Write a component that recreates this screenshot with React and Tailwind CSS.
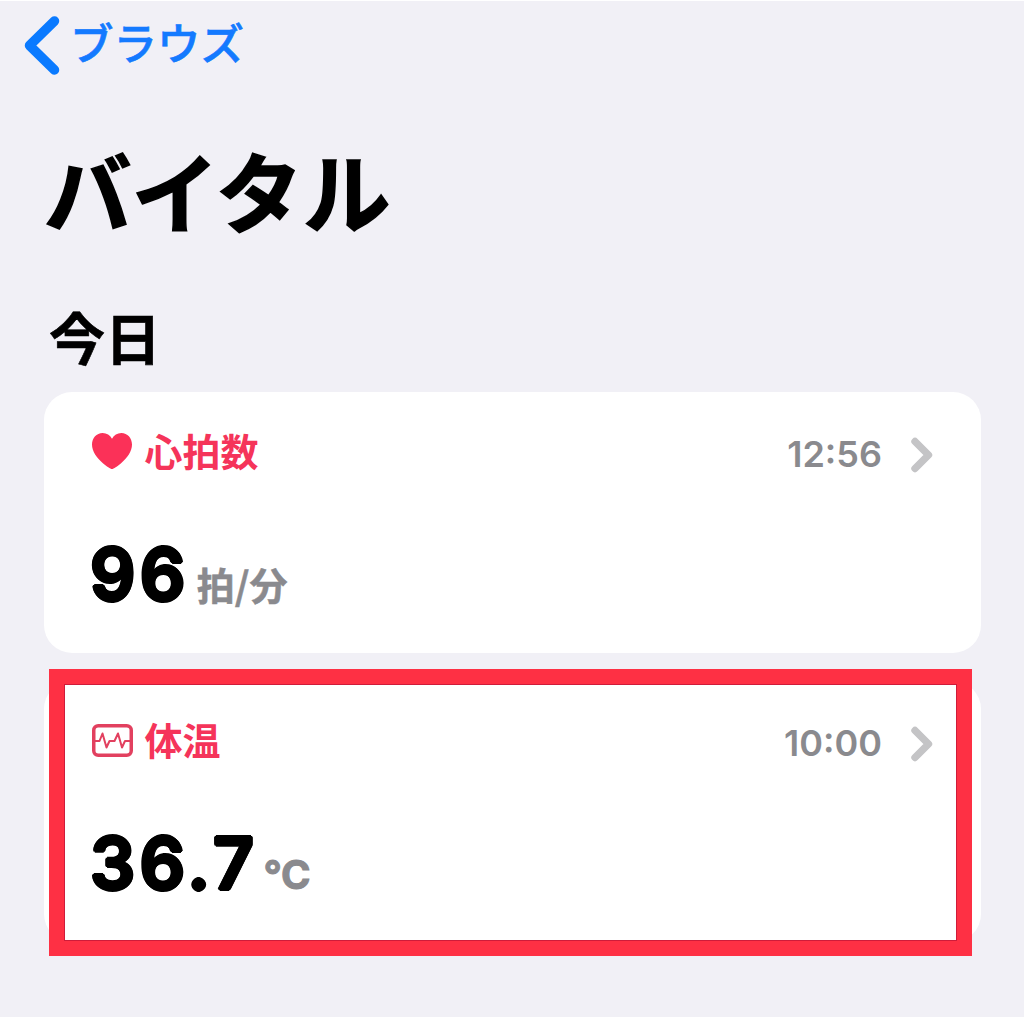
function Chevron() {
  return (
    <svg width="22" height="36" viewBox="0 0 22 36" fill="none" className="shrink-0">
      <path
        d="M4 4.5L17.5 18L4 31.5"
        stroke="#c4c4c6"
        strokeWidth="7.4"
        strokeLinecap="round"
        strokeLinejoin="round"
      />
    </svg>
  );
}

function HeartIcon() {
  return (
    <svg width="40" height="36" viewBox="0 0 40 36" className="shrink-0">
      <path
        d="M20 36C18.6 36 14.4 33.2 11.2 30.4C4.6 24.9 0 18.6 0 11.6C0 5 4.6 0 10.6 0C14.8 0 18 2.2 20 5.7C22 2.2 25.2 0 29.4 0C35.4 0 40 5 40 11.6C40 18.6 35.4 24.9 28.8 30.4C25.6 33.2 21.4 36 20 36Z"
        fill="#fb3158"
      />
    </svg>
  );
}

function VitalsIcon() {
  return (
    <svg width="41" height="33" viewBox="0 0 41 33" fill="none" className="shrink-0">
      <rect x="1.75" y="1.75" width="37.5" height="29.5" rx="4.5" stroke="#e2405f" strokeWidth="3.5" />
      <path
        d="M2 17H7.5L10.5 9.5L14.5 23.5L17.5 17H22.5L26 9.5L30 23.5L33 17H39"
        stroke="#e2405f"
        strokeWidth="2"
        strokeLinejoin="round"
      />
    </svg>
  );
}

function VitalCard({ icon, title, time, value, unit }) {
  return (
    <section className="flex h-[261px] flex-col rounded-[28px] bg-white pl-[46px] pr-[48px] pt-[39px]">
      <div className="flex h-10 items-center">
        <div className="ml-[2px] flex w-10 items-center justify-center">{icon}</div>
        <h3 className="-mt-[3px] ml-[12.5px] text-[38px] font-bold leading-10 text-[#f5345a]">
          {title}
        </h3>
        <time className="ml-auto mr-[29px] mt-[5px] font-['Inter'] text-[36px] font-semibold leading-10 text-[#8a8a8e]">
          {time}
        </time>
        <div className="mt-[7px]">
          <Chevron />
        </div>
      </div>
      <p className="mt-[63px] flex h-[80px] items-baseline leading-[80px]">
        {/* the shadows thicken the digits and round off their ends */}
        <span className="font-['Inter'] text-[71px] font-semibold tracking-[4.5px] text-black [text-shadow:1.8px_0_#000,-1.8px_0_#000,0_1.6px_#000,0_-1.6px_#000,1.2px_1.2px_#000,-1.2px_1.2px_#000,1.2px_-1.2px_#000,-1.2px_-1.2px_#000]">
          {value}
        </span>
        {unit}
      </p>
    </section>
  );
}

export default function App() {
  return (
    <main className="h-[1017px] w-[1024px] overflow-hidden border-t border-white bg-[#f1f0f6] font-['Noto_Sans_CJK_JP',sans-serif]">
      <nav className="flex h-[90px] items-center pl-6">
        <svg width="36" height="60" viewBox="0 0 36 60" fill="none">
          <path
            d="M30.5 5L5.5 29.5L30.5 54"
            stroke="#0a7aff"
            strokeWidth="9.5"
            strokeLinecap="round"
            strokeLinejoin="round"
          />
        </svg>
        <span className="-mt-[8px] ml-[10px] text-[43.5px] font-medium leading-[60px] text-[#147aff] [-webkit-text-stroke:0.6px_#147aff]">
          ブラウズ
        </span>
      </nav>
      <h1 className="ml-[44px] mt-[48px] h-[100px] text-[87.5px] font-bold leading-[100px] text-black [-webkit-text-stroke:1.5px_#000]">
        バイタル
      </h1>
      <h2 className="ml-[49px] mt-[67px] h-[60px] text-[56px] font-bold leading-[60px] text-black [-webkit-text-stroke:0.6px_#000]">
        今日
      </h2>
      <div className="relative ml-[44px] mt-[26px] flex w-[937px] flex-col gap-7">
        <VitalCard
          icon={<HeartIcon />}
          title="心拍数"
          time="12:56"
          value="96"
          unit={
            <span className="ml-[7px] text-[38px] font-bold text-[#8a8a8e] [-webkit-text-stroke:0.5px_#8a8a8e]">
              拍/分
            </span>
          }
        />
        <VitalCard
          icon={<VitalsIcon />}
          title="体温"
          time="10:00"
          value="36.7"
          unit={
            <span className="ml-[5px] font-['Inter'] text-[40px] font-bold text-[#8a8a8e] [-webkit-text-stroke:1px_#8a8a8e]">
              °C
            </span>
          }
        />
        {/* highlight around the temperature card */}
        <div className="absolute left-[5px] top-[277px] h-[287px] w-[923px] border-[15px] border-[#fe3044] shadow-[inset_0_0_0_1px_#cf1c3a]" />
      </div>
    </main>
  );
}
